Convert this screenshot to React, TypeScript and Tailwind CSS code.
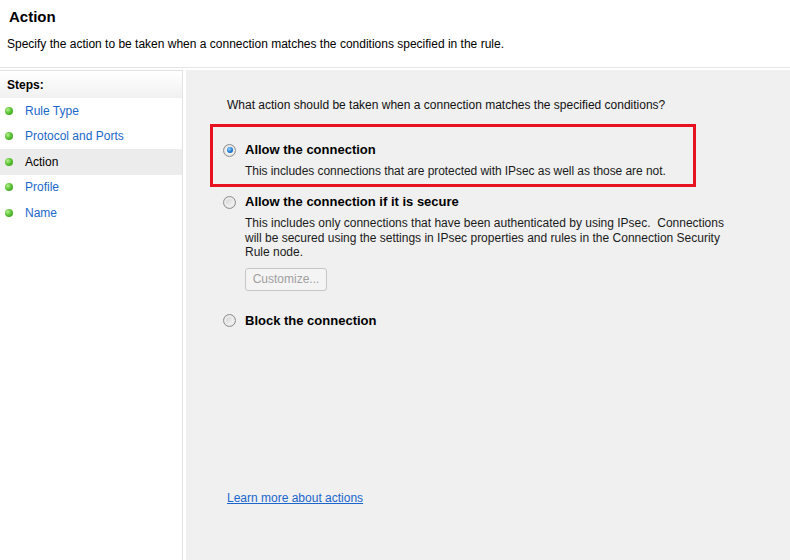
import React from "react";

const font = { fontFamily: '"Liberation Sans", Arial, sans-serif' };

function Dot() {
  return (
    <span className="inline-block w-[8px] h-[8px] rounded-full bg-[radial-gradient(circle_at_35%_35%,#b8f08f_0%,#5cc437_45%,#2b8f14_100%)]" />
  );
}

function Radio({ checked }: { checked?: boolean }) {
  return (
    <span className="relative inline-flex items-center justify-center w-[13px] h-[13px] rounded-full border border-[#8e8f8f] bg-[radial-gradient(circle_at_50%_50%,#ffffff_0%,#f0f0f0_50%,#c9c9c9_100%)]">
      {checked ? (
        <span className="w-[6px] h-[6px] rounded-full bg-[radial-gradient(circle_at_40%_35%,#8fd8ff_0%,#1f7ad0_55%,#0a356a_100%)]" />
      ) : (
        <span className="w-[7px] h-[7px] rounded-full bg-[linear-gradient(135deg,#d4d4d4,#f6f6f6)]" />
      )}
    </span>
  );
}

const steps = ["Rule Type", "Protocol and Ports", "Action", "Profile", "Name"];

export default function App() {
  return (
    <div className="w-[790px] h-[560px] flex flex-col bg-white text-[12px] text-black overflow-hidden" style={font}>
      <div className="h-[67px] shrink-0 bg-white pl-[9px]">
        <div className="pt-[8px] h-[26px] leading-[18px] text-[15px] font-bold">Action</div>
        <div className="pt-[11px] leading-[14px] -ml-[2px]">
          Specify the action to be taken when a connection matches the conditions specified in the rule.
        </div>
      </div>
      <div className="h-px bg-[#e6e6e6] shrink-0" />
      <div className="h-[2px] bg-white shrink-0" />
      <div className="flex flex-1 min-h-0">
        <div className="w-[183px] shrink-0 bg-white border-r border-t border-[#e3e3e3] flex flex-col">
          <div className="h-[27px] flex items-center pl-[7px] font-bold bg-[linear-gradient(#ffffff,#f1f1f1)]">
            Steps:
          </div>
          {steps.map((s) => (
            <div
              key={s}
              className={
                "h-[25.5px] flex items-center pl-[5px] gap-[12px] " +
                (s === "Action" ? "bg-[#ececec]" : "")
              }
            >
              <Dot />
              <span className={s === "Action" ? "text-black" : "text-[#1a68c9]"}>{s}</span>
            </div>
          ))}
        </div>
        <div className="w-[3px] bg-white shrink-0" />
        <div className="flex-1 bg-[#f0f0f0] flex flex-col">
          <div className="pl-[41px] pt-[28px] leading-[14px] text-[#111]">
            What action should be taken when a connection matches the specified conditions?
          </div>
          <div className="ml-[24px] mt-[12px] w-[486px] h-[63px] border-[3px] border-[#e8111f] pl-[10px] pt-[15px]">
            <div className="h-[16px] flex items-center gap-[9px]">
              <Radio checked />
              <span className="font-bold text-[13px]">Allow the connection</span>
            </div>
            <div className="mt-[6px] pl-[22px] leading-[14px] text-[#1a1a1a] tracking-[-0.06px]">
              This includes connections that are protected with IPsec as well as those are not.
            </div>
          </div>
          <div className="pl-[37px] mt-[7px]">
            <div className="h-[16px] flex items-center gap-[9px]">
              <Radio />
              <span className="font-bold text-[13px]">Allow the connection if it is secure</span>
            </div>
            <div className="mt-[6px] pl-[22px] leading-[14.5px] w-[520px] text-[#1a1a1a]">
              This includes only connections that have been authenticated by using IPsec.&nbsp; Connections will be secured using the settings in IPsec properties and rules in the Connection Security Rule node.
            </div>
            <div className="mt-[8px] ml-[22px] w-[82px] h-[23px] border border-[#c6c6c6] rounded-[3px] bg-[#f4f4f4] flex items-center justify-center text-[#a0a0a0]">
              Customize...
            </div>
            <div className="mt-[22px] h-[16px] flex items-center gap-[9px]">
              <Radio />
              <span className="font-bold text-[13px]">Block the connection</span>
            </div>
          </div>
          <div className="mt-auto pb-[55px] pl-[41px] leading-[14px]">
            <span className="text-[#1a66cc] underline">Learn more about actions</span>
          </div>
        </div>
      </div>
    </div>
  );
}
